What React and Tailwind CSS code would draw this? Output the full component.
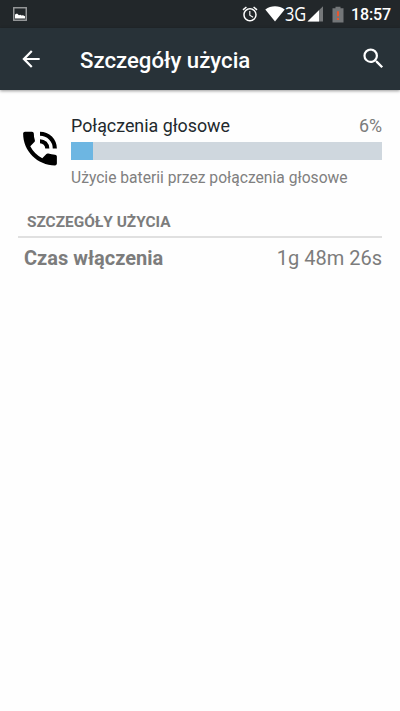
import React from 'react';

const SZCZEGOLY = [{ label: 'Czas włączenia', value: '1g 48m 26s' }];

const Icon = ({ d, className }) => (
  <svg viewBox="0 0 24 24" fill="currentColor" className={className}>
    <path d={d} />
  </svg>
);

const ICON_BACK = 'M20 11H7.83l5.59-5.59L12 4l-8 8 8 8 1.41-1.41L7.83 13H20v-2z';
const ICON_SEARCH =
  'M15.5 14h-.79l-.28-.27A6.471 6.471 0 0 0 16 9.5 6.5 6.5 0 1 0 9.5 16c1.61 0 3.09-.59 4.23-1.57l.27.28v.79l5 4.99L20.49 19l-4.99-5zm-6 0C7.01 14 5 11.99 5 9.5S7.01 5 9.5 5 14 7.01 14 9.5 11.99 14 9.5 14z';
const ICON_CALL =
  'M20 15.3c-1.25 0-2.45-.2-3.57-.57a1.02 1.02 0 0 0-1.02.24l-2.2 2.2a15.045 15.045 0 0 1-6.4-6.4l2.2-2.21a.96.96 0 0 0 .25-1A11.36 11.36 0 0 1 8.7 4c0-.55-.45-1-1-1H4c-.55 0-1 .45-1 1 0 9.39 7.61 17 17 17 .55 0 1-.45 1-1v-3.7c0-.55-.45-1-1-1zM18.8 12H21a9 9 0 0 0-9-9v2.2a6.8 6.8 0 0 1 6.8 6.8zm-4 0H17a5 5 0 0 0-5-5v2.2a2.8 2.8 0 0 1 2.8 2.8z';
const ICON_ALARM =
  'M22 5.72l-4.6-3.86-1.29 1.53 4.6 3.86L22 5.72zM7.88 3.39L6.6 1.86 2 5.71l1.29 1.53 4.59-3.85zM12.5 8H11v6l4.75 2.85.75-1.23-4-2.37V8zM12 4c-4.97 0-9 4.03-9 9s4.02 9 9 9a9 9 0 0 0 0-18zm0 16c-3.87 0-7-3.13-7-7s3.13-7 7-7 7 3.13 7 7-3.13 7-7 7z';

const StatusBar = () => (
  <div className="flex h-7 items-center bg-[#22272a] pl-[13px] pr-[9px] text-white">
    <svg viewBox="0 0 14 14" className="size-[14px]">
      <rect x="0.75" y="0.75" width="12.5" height="12.5" fill="none" stroke="#9b9d9e" strokeWidth="1.4" />
      <path d="M2 11.5V7.5l2-1 2 1.700 1.300-.4 1.200.8 1.500-.3 2 1v2.200z" fill="#fff" />
    </svg>
    <div className="ml-auto flex items-center">
      <Icon d={ICON_ALARM} className="mr-[6px] size-[18px]" />
      <svg viewBox="0 0 20 16" className="h-4 w-5">
        <path d="M.3 3.4C6-.8 14-.8 19.7 3.4L10 15.5z" fill="#fff" />
      </svg>
      <div className="w-[22px]">
        <span className="block origin-left scale-x-[0.84] whitespace-nowrap font-['Open_Sans',sans-serif] text-[19.5px] leading-7">
          3G
        </span>
      </div>
      <svg viewBox="0 0 17 16" className="h-4 w-[17px]">
        <path d="M.5 15.5L16 .3V15.5z" fill="#75787a" />
        <path d="M.5 15.5L12 4.2V15.5z" fill="#fff" />
      </svg>
      <svg viewBox="0 0 12 17" className="ml-[8px] h-[17px] w-3">
        <path d="M.5 2.3H3.5V.7h5V2.3h3V16.5H.5z" fill="#737678" />
        <path d="M5 5.2h2v5H5zM5 12h2v2H5z" fill="#e8552d" />
      </svg>
      <span className="ml-[7px] mt-[2px] text-[16px] font-medium leading-7 tracking-[-0.1px]">18:57</span>
    </div>
  </div>
);

const ActionBar = () => (
  <div className="flex h-[62px] items-center bg-[#283238] pl-[18px] pr-[13px] text-white shadow-[0_1px_3px_rgba(0,0,0,0.4)]">
    <Icon d={ICON_BACK} className="mb-px size-[26px]" />
    <h1 className="ml-[36px] mt-px text-[22.2px] font-medium leading-7">Szczegóły użycia</h1>
    <Icon d={ICON_SEARCH} className="mb-px ml-auto size-[27px]" />
  </div>
);

const App = () => (
  <div className="h-[711px] w-full overflow-hidden bg-[#fefefe] font-[Roboto,sans-serif]">
    <StatusBar />
    <ActionBar />

    <div className="flex pl-[18px] pr-[18px] pt-[25px]">
      <Icon d={ICON_CALL} className="mr-[8px] mt-[11px] size-[45px] shrink-0 -translate-x-[0.5px] text-black" />
      <div className="flex-1">
        <div className="flex justify-between text-[17.85px] leading-[22px]">
          <span className="text-[#22292d]">Połączenia głosowe</span>
          <span className="text-[#7c7c7c]">6%</span>
        </div>
        <div className="mt-[5px] h-[18px] bg-[#cfd7de]">
          <div className="h-full w-[22px] bg-[#6db6e2]" />
        </div>
        <p className="mt-[8px] text-[15.63px] leading-5 text-[#808080]">Użycie baterii przez połączenia głosowe</p>
      </div>
    </div>

    <div className="mx-[18px] mt-[24px] border-b-2 border-[#e0e0e0] pb-[4px] pl-[9px]">
      <h2 className="text-[15.4px] font-bold leading-5 text-[#7c7c7c]">SZCZEGÓŁY UŻYCIA</h2>
    </div>
    {SZCZEGOLY.map((s) => (
      <div
        key={s.label}
        className="flex justify-between pl-6 pr-[18px] pt-[7px] text-[20px] leading-[26px] text-[#7c7c7c]"
      >
        <span className="font-bold">{s.label}</span>
        <span>{s.value}</span>
      </div>
    ))}
  </div>
);

export default App;
